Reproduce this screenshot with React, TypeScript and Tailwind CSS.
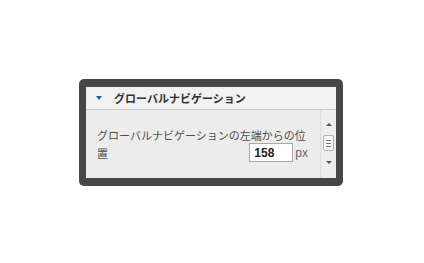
import * as React from "react"

export default function App() {
  return (
    <div className="min-h-screen bg-white pt-[79px] pl-[79px]">
      <div className="w-[264px] h-[107px] rounded-[5px] bg-[#474747] pt-[8px] pb-[8px] px-[7px]">
        <div className="flex h-full flex-col font-['Noto_Sans_CJK_JP',sans-serif]">
          {/* Header */}
          <div className="flex h-[23px] items-center border-b border-[#c8c8c8] bg-[#f1f1f1] pl-[10px]">
            <span className="h-0 w-0 border-x-[3px] border-t-[4px] border-x-transparent border-t-[#22619f]" />
            <span className="ml-[12px] text-[11px] font-bold leading-none text-[#333333]">
              グローバルナビゲーション
            </span>
          </div>

          {/* Body */}
          <div className="flex flex-1 bg-[#ececec]">
            <div className="flex-1 pl-[11px] pr-[12px] pt-[17px] text-[11px] leading-[16px] text-[#4d4d4d]">
              <div>グローバルナビゲーションの左端からの位</div>
              <div className="flex h-[19px] items-center justify-between">
                <span>置</span>
                <div className="flex items-center">
                  <div className="flex h-[19px] w-[44px] items-center border border-[#a9a9a9] bg-white pl-[4px] font-['Liberation_Sans',sans-serif] text-[12px] font-bold text-[#222222]">
                    158
                  </div>
                  <span className="ml-[2px] font-['Liberation_Sans',sans-serif] text-[12px] text-[#666666]">px</span>
                </div>
              </div>
            </div>

            {/* Scrollbar */}
            <div className="flex w-[16px] flex-col items-center border-l border-[#dcdcdc] bg-[#eeeeee] pt-[13px]">
              <span className="h-0 w-0 border-x-[3px] border-b-[3px] border-x-transparent border-b-[#555555]" />
              <div className="mt-[9px] flex h-[16px] w-[11px] flex-col items-center justify-center gap-[2px] rounded-[2px] border border-[#b0b0b0] bg-[#f7f7f7]">
                <span className="h-px w-[5px] bg-[#777777]" />
                <span className="h-px w-[5px] bg-[#777777]" />
                <span className="h-px w-[5px] bg-[#777777]" />
              </div>
              <span className="mt-[10px] h-0 w-0 border-x-[3px] border-t-[3px] border-x-transparent border-t-[#555555]" />
            </div>
          </div>
        </div>
      </div>
    </div>
  )
}
